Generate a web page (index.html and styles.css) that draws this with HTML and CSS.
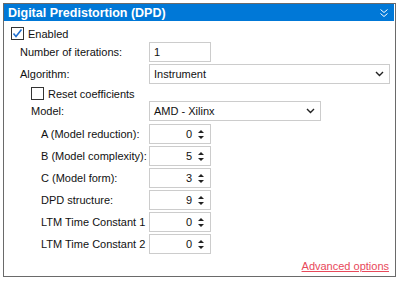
FILE: index.html
```html
<!doctype html>
<html lang="en">
<head>
  <meta charset="UTF-8">
  <title>Digital Predistortion (DPD)</title>
  <link rel="stylesheet" href="styles.css">
</head>
<body>
  <div class="panel">
    <div class="panel-head">
      <span class="panel-title">Digital Predistortion (DPD)</span>
      <svg class="collapse" width="8" height="8" viewBox="0 0 8 8">
        <path d="M0.5 0.5 L4 3.5 L7.5 0.5 M0.5 4.5 L4 7.5 L7.5 4.5" fill="none" stroke="#fff" stroke-width="1"/>
      </svg>
    </div>

    <div class="panel-body">
      <div class="check check-top">
        <span class="box">
          <svg width="11" height="11" viewBox="0 0 11 11">
            <path d="M1.5 5.5 L4 8.5 L9.5 1.5" fill="none" stroke="#1f6fd0" stroke-width="1.6"/>
          </svg>
        </span>
        Enabled
      </div>

      <div class="row">
        <div class="label lvl-1">Number of iterations:</div>
        <div class="field field-short">1</div>
      </div>

      <div class="row">
        <div class="label lvl-1">Algorithm:</div>
        <div class="field select field-wide">
          Instrument
          <svg class="caret" width="9" height="6" viewBox="0 0 9 6"><path d="M1 1 L4.5 4.5 L8 1" fill="none" stroke="#222" stroke-width="1.4"/></svg>
        </div>
      </div>

      <div class="check check-reset">
        <span class="box"></span>
        Reset coefficients
      </div>

      <div class="row row-model">
        <div class="label lvl-2">Model:</div>
        <div class="field select field-mid">
          AMD - Xilinx
          <svg class="caret" width="9" height="6" viewBox="0 0 9 6"><path d="M1 1 L4.5 4.5 L8 1" fill="none" stroke="#222" stroke-width="1.4"/></svg>
        </div>
      </div>

      <div class="row">
        <div class="label lvl-3">A (Model reduction):</div>
        <div class="field spin"><span class="num">0</span><span class="arrows"><i class="up"></i><i class="down"></i></span></div>
      </div>
      <div class="row">
        <div class="label lvl-3">B (Model complexity):</div>
        <div class="field spin"><span class="num">5</span><span class="arrows"><i class="up"></i><i class="down"></i></span></div>
      </div>
      <div class="row">
        <div class="label lvl-3">C (Model form):</div>
        <div class="field spin"><span class="num">3</span><span class="arrows"><i class="up"></i><i class="down"></i></span></div>
      </div>
      <div class="row">
        <div class="label lvl-3">DPD structure:</div>
        <div class="field spin"><span class="num">9</span><span class="arrows"><i class="up"></i><i class="down"></i></span></div>
      </div>
      <div class="row">
        <div class="label lvl-3">LTM Time Constant 1</div>
        <div class="field spin"><span class="num">0</span><span class="arrows"><i class="up"></i><i class="down"></i></span></div>
      </div>
      <div class="row">
        <div class="label lvl-3">LTM Time Constant 2</div>
        <div class="field spin"><span class="num">0</span><span class="arrows"><i class="up"></i><i class="down"></i></span></div>
      </div>

      <div class="footer">
        <a class="link" href="#">Advanced options</a>
      </div>
    </div>
  </div>
</body>
</html>
```

FILE: styles.css
```css
body {
    margin: 0;
    background: #ffffff;
    font-family: "Liberation Sans", Arial, sans-serif;
    font-size: 11px;
    color: #111;
}

.panel {
    margin: 3px 0 0 3px;
    width: 391px;
    height: 272px;
    border: 1px solid #6a6a6a;
    display: flex;
    flex-direction: column;
}

.panel-head {
    height: 17px;
    margin-right: 1px;
    background: #0078d7;
    color: #fff;
    display: flex;
    align-items: center;
    justify-content: space-between;
    padding: 0 6px 0 4px;
}

.panel-title {
    font-weight: bold;
    font-size: 12.5px;
}

.panel-body {
    flex: 1;
    display: flex;
    flex-direction: column;
    padding: 5px 0 0 0;
}

/* checkboxes */
.check {
    display: flex;
    align-items: center;
}

.check-top {
    height: 15px;
    padding-left: 7px;
    margin-bottom: 1px;
}

.check-reset {
    height: 13px;
    padding-left: 27px;
    margin: 1px 0 1px;
}

.box {
    width: 11px;
    height: 11px;
    border: 1px solid #333;
    margin-right: 4px;
    display: flex;
}

/* form rows */
.row {
    display: flex;
    align-items: center;
    height: 20px;
    margin-bottom: 2px;
}

.row-model {
    margin-bottom: 3px;
}

.label {
    width: 145px;
    box-sizing: border-box;
}

.lvl-1 { padding-left: 16px; }
.lvl-2 { padding-left: 27px; }
.lvl-3 { padding-left: 37px; }

.field {
    height: 20px;
    box-sizing: border-box;
    border: 1px solid #cccccc;
    display: flex;
    align-items: center;
    padding: 0 4px;
}

.field-short { width: 62px; }
.field-wide { width: 241px; }
.field-mid { width: 172px; }

.select .caret {
    margin-left: auto;
    margin-right: 1px;
}

.spin {
    width: 62px;
    justify-content: flex-end;
    padding-right: 6px;
}

.spin .num {
    margin-right: 6px;
}

.arrows {
    display: flex;
    flex-direction: column;
    gap: 3px;
}

.arrows i {
    width: 0;
    height: 0;
    border-left: 3px solid transparent;
    border-right: 3px solid transparent;
}

.arrows .up { border-bottom: 3px solid #222; }
.arrows .down { border-top: 3px solid #222; }

.footer {
    margin-top: auto;
    display: flex;
    justify-content: flex-end;
    padding: 0 6px 4px 0;
}

.link {
    color: #e8485a;
    text-decoration: underline;
}
```
